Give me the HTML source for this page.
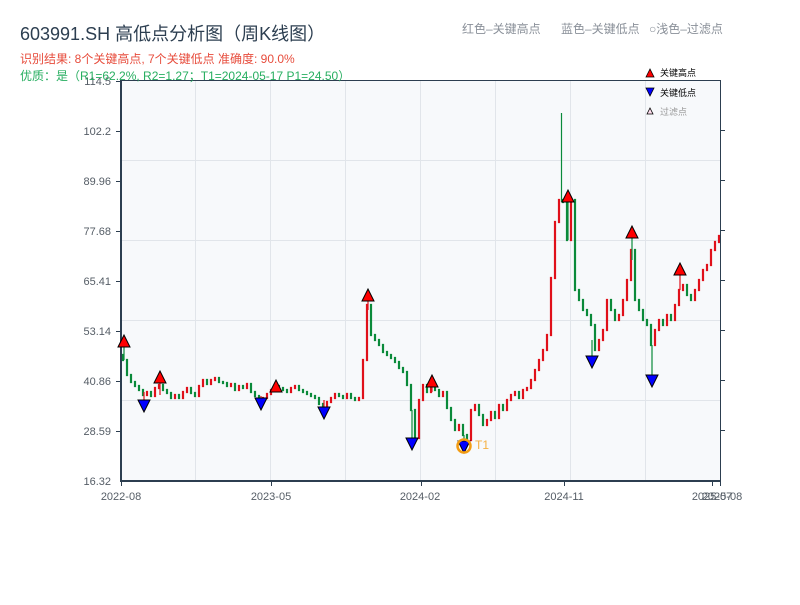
<!DOCTYPE html>
<html><head><meta charset="utf-8"><style>
body{margin:0;background:#fff;width:800px;height:600px;overflow:hidden;font-family:"Liberation Sans","Noto Sans CJK SC",sans-serif}
</style></head><body>
<svg width="800" height="600" xmlns="http://www.w3.org/2000/svg" font-family="Liberation Sans, Noto Sans CJK SC, sans-serif">
<rect x="121" y="80" width="599" height="401" fill="#f7f9fb"/>
<g stroke="#e1e5ea" stroke-width="1">
<line x1="195.5" y1="80" x2="195.5" y2="481"/><line x1="270.5" y1="80" x2="270.5" y2="481"/><line x1="345.5" y1="80" x2="345.5" y2="481"/><line x1="420.5" y1="80" x2="420.5" y2="481"/><line x1="495.5" y1="80" x2="495.5" y2="481"/><line x1="570.5" y1="80" x2="570.5" y2="481"/><line x1="645.5" y1="80" x2="645.5" y2="481"/>
<line x1="121" y1="160.5" x2="720" y2="160.5"/><line x1="121" y1="240.5" x2="720" y2="240.5"/><line x1="121" y1="320.5" x2="720" y2="320.5"/><line x1="121" y1="400.5" x2="720" y2="400.5"/>
</g>
<path fill="none" stroke="#e0101a" stroke-width="2.2" stroke-linecap="square" d="M147 395V392M155 396V388M159 388V385M175 398V395M183 398V392M187 392V388M199 396V386M203 386V380M211 384V380M215 380V378M231 386V384M239 390V386M247 388V384M263 400V398M267 398V394M271 394V390M275 390V386M291 392V388M295 388V386M327 408V402M331 402V398M335 398V394M347 398V394M359 400V398M363 398V360M367 360V305M419 438V400M423 400V385M431 392V384M443 396V392M459 430V425M471 440V410M475 410V405M487 425V420M491 420V412M499 418V405M507 410V400M511 400V395M515 395V392M523 398V390M527 390V388M531 388V380M535 380V370M539 370V360M543 360V350M547 350V335M551 335V278M555 278V222M559 222V200M571 240V200M599 350V340M603 340V330M607 330V300M619 320V315M623 315V300M627 300V280M631 280V250M655 345V330M659 330V320M667 325V315M675 320V305M679 305V290M683 290V285M695 300V290M699 290V280M703 280V270M707 270V265M711 265V250M715 250V242M719 242V236"/>
<path fill="none" stroke="#0a8a3a" stroke-width="2.2" stroke-linecap="square" d="M123 355V360M127 360V375M131 375V382M135 382V386M139 386V390M143 390V395M151 392V396M163 385V390M167 390V393M171 393V398M179 395V398M191 388V393M195 393V396M207 380V384M219 378V382M223 382V383M227 383V386M235 384V390M243 386V388M251 384V392M255 392V396M259 396V400M279 386V388M283 388V390M287 390V392M299 386V390M303 390V392M307 392V394M311 394V396M315 396V398M319 398V404M323 404V408M339 394V396M343 396V398M351 394V398M355 398V400M371 305V335M375 335V340M379 340V345M383 345V352M387 352V355M391 355V358M395 358V362M399 362V368M403 368V372M407 372V385M411 385V410M415 410V438M427 385V392M435 384V390M439 390V396M447 392V408M451 408V420M455 420V430M463 425V435M467 435V440M479 405V415M483 415V425M495 412V418M503 405V410M519 392V398M563 200V202M567 200V240M575 200V290M579 290V300M583 300V310M587 310V315M591 315V325M595 325V350M611 300V310M615 310V320M635 250V300M639 300V310M643 310V320M647 320V325M651 325V345M663 320V325M671 315V320M687 285V295M691 295V300"/>
<path fill="none" stroke="#0a8a3a" stroke-width="1.2" d="M124 341V360M561.5 113V202M415 438V444M592 340V362M652 345V381M632 232V260M568 196V240M464 435V447M412 410V444"/>
<path fill="none" stroke="#e0101a" stroke-width="1.2" d="M160 377V395M276 386V392M368 295V310M432 381V392M680 269V290M144 392V406M261 396V404M324 400V413"/>
<g stroke="#2c3e50">
<line x1="121" y1="80.5" x2="720" y2="80.5" stroke-width="1"/>
<line x1="121" y1="80" x2="121" y2="482" stroke-width="2"/>
<line x1="720.5" y1="80" x2="720.5" y2="482" stroke-width="1"/>
<line x1="120" y1="481" x2="721" y2="481" stroke-width="2"/>
</g>
<g stroke="#2c3e50" stroke-width="1">
<line x1="116" y1="81.5" x2="121" y2="81.5"/><line x1="116" y1="131.5" x2="121" y2="131.5"/><line x1="116" y1="181.5" x2="121" y2="181.5"/><line x1="116" y1="231.5" x2="121" y2="231.5"/><line x1="116" y1="281.5" x2="121" y2="281.5"/><line x1="116" y1="331.5" x2="121" y2="331.5"/><line x1="116" y1="381.5" x2="121" y2="381.5"/><line x1="116" y1="431.5" x2="121" y2="431.5"/>
<line x1="720" y1="130.5" x2="725" y2="130.5"/><line x1="720" y1="180.5" x2="725" y2="180.5"/><line x1="720" y1="230.5" x2="725" y2="230.5"/><line x1="720" y1="280.5" x2="725" y2="280.5"/><line x1="720" y1="330.5" x2="725" y2="330.5"/><line x1="720" y1="380.5" x2="725" y2="380.5"/><line x1="720" y1="430.5" x2="725" y2="430.5"/>
<line x1="121.5" y1="481" x2="121.5" y2="486"/><line x1="271.5" y1="481" x2="271.5" y2="486"/><line x1="421.5" y1="481" x2="421.5" y2="486"/><line x1="564.5" y1="481" x2="564.5" y2="486"/><line x1="712.5" y1="481" x2="712.5" y2="486"/><line x1="720.5" y1="481" x2="720.5" y2="486"/>
</g>
<g font-size="11" fill="#555d66" text-anchor="end">
<text x="111" y="85">114.5</text><text x="111" y="135">102.2</text><text x="111" y="185">89.96</text><text x="111" y="235">77.68</text><text x="111" y="285">65.41</text><text x="111" y="335">53.14</text><text x="111" y="385">40.86</text><text x="111" y="435">28.59</text><text x="111" y="485">16.32</text>
</g>
<g font-size="11" fill="#555d66" text-anchor="middle">
<text x="121" y="500">2022-08</text><text x="271" y="500">2023-05</text><text x="420" y="500">2024-02</text><text x="564" y="500">2024-11</text><text x="712" y="500">2025-07</text><text x="722" y="500">2025-08</text>
</g>
<g fill="#f00" stroke="#000" stroke-width="1">
<polygon points="118,347 124,335 130,347"/><polygon points="154,383 160,371 166,383"/><polygon points="270,392 276,380 282,392"/><polygon points="362,301 368,289 374,301"/><polygon points="426,387 432,375 438,387"/><polygon points="562,202 568,190 574,202"/><polygon points="626,238 632,226 638,238"/><polygon points="674,275 680,263 686,275"/>
</g>
<g fill="#00f" stroke="#000" stroke-width="1">
<polygon points="138,400 144,412 150,400"/><polygon points="255,398 261,410 267,398"/><polygon points="318,407 324,419 330,407"/><polygon points="406,438 412,450 418,438"/><polygon points="458,441 464,453 470,441"/><polygon points="586,356 592,368 598,356"/><polygon points="646,375 652,387 658,375"/>
</g>
<circle cx="464" cy="446" r="6.5" fill="none" stroke="#f39c12" stroke-width="2.5"/>
<text x="475" y="449" font-size="12" fill="#f5b041">T1</text>
<text x="20" y="40" font-size="18" fill="#2c3e50">603991.SH 高低点分析图（周K线图）</text>
<text x="20" y="63" font-size="12" fill="#e74c3c">识别结果: 8个关键高点, 7个关键低点  准确度: 90.0%</text>
<text x="20" y="80" font-size="12" fill="#27ae60">优质：是（R1=62.2%, R2=1.27；T1=2024-05-17 P1=24.50）</text>
<g font-size="12" fill="#8a9099">
<text x="462" y="33">红色–关键高点</text><text x="561" y="33">蓝色–关键低点</text><text x="649" y="33">○浅色–过滤点</text>
</g>
<polygon points="646,77 650,69 654,77" fill="#f00" stroke="#000" stroke-width="0.8"/>
<text x="660" y="76" font-size="9" fill="#000">关键高点</text>
<polygon points="646,88 650,96 654,88" fill="#00f" stroke="#000" stroke-width="0.8"/>
<text x="660" y="96" font-size="9" fill="#000">关键低点</text>
<polygon points="647,114 650,108 653,114" fill="#fde" stroke="#000" stroke-width="0.8"/>
<text x="660" y="115" font-size="9" fill="#999">过滤点</text>
</svg>
</body></html>
